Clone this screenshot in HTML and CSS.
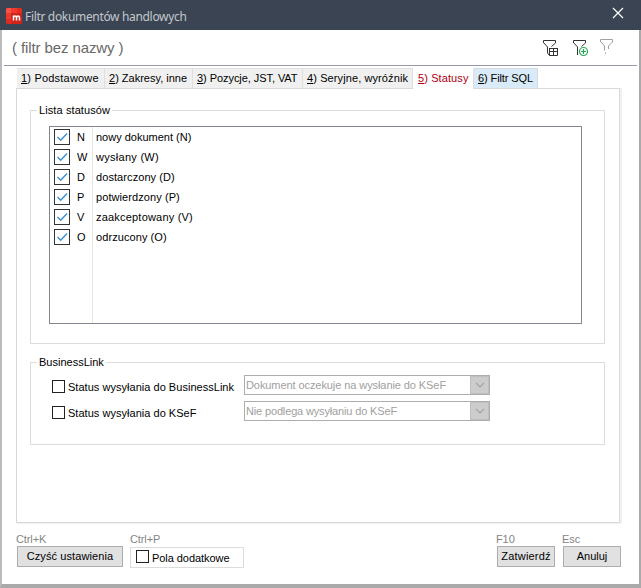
FILE: index.html
```html
<!DOCTYPE html>
<html lang="pl">
<head>
<meta charset="utf-8">
<title>Filtr dokumentów handlowych</title>
<link rel="stylesheet" href="styles.css">
</head>
<body>
<div class="window">
  <header class="titlebar">
    <svg class="logo" width="16" height="16" viewBox="0 0 16 16"><rect width="16" height="16" rx="1.5" fill="#df2b20"/><path d="M0 1.500Q0 0 1.500 0H5V5H0Z" fill="#fa5149"/><path d="M5 0h6v5H5z" fill="#f1382e"/><path d="M0 5h5v6H0z" fill="#ee382d"/><path d="M5 5h11v9.500q0 1.500-1.500 1.500H5z" fill="#d0231a"/><path d="M7.500 12.500V7.500M7.500 9.500Q7.800 8 9 8T10.500 9.600V12.500M10.500 9.600Q10.800 8 12 8T13.500 9.600V12.500" fill="none" stroke="#fff" stroke-width="1.500"/></svg>
    <h1 class="title">Filtr dokumentów handlowych</h1>
    <svg class="close" width="12" height="12" viewBox="0 0 12 12"><path d="M1 1l10 10M11 1L1 11" stroke="#fff" stroke-width="1.200"/></svg>
  </header>
  <main class="body">
    <div class="filterbar">
      <span class="name">( filtr bez nazwy )</span>
      <svg class="tool" width="16" height="17" viewBox="0 0 16 17" fill="none" stroke="#333"><path d="M.5 3V.5h12V3L8.500 6.500M.5 2.500L4.500 7V13l2 2.500"/><path d="M6.500 8.500h8v7h-8zM6 8.500h9M6.500 11.500h8M10.500 8.500v7"/></svg>
      <svg class="tool" width="16" height="17" viewBox="0 0 16 17" fill="none" stroke="#333"><path d="M.5 3V.5h12V3L8.500 6.500M.5 2.500L4.500 7V15"/><circle cx="10.500" cy="11.500" r="4" stroke="#27a857" stroke-width="1.200"/><path d="M8 11.500h5M10.500 9v5" stroke="#27a857" stroke-width="1.200"/></svg>
      <svg class="tool faded" width="14" height="16" viewBox="0 0 14 16" fill="none" stroke="#a0a0a0"><path d="M.5 3V.5h12V3L8.500 7V10M.5 2.500L4.500 7V11.500"/><path d="M5.500 13.500v1.500"/></svg>
    </div>
    <nav class="tabs">
      <a class="tab t1"><span><u>1</u>) Podstawowe</span></a>
      <a class="tab t2"><span><u>2</u>) Zakresy, inne</span></a>
      <a class="tab t3"><span><u>3</u>) Pozycje, JST, VAT</span></a>
      <a class="tab t4"><span><u>4</u>) Seryjne, wyróźnik</span></a>
      <a class="tab t5 active"><span><u>5</u>) Statusy</span></a>
      <a class="tab t6 sql"><span><u>6</u>) Filtr SQL</span></a>
    </nav>
    <section class="panel">
      <fieldset class="group statuses">
        <legend class="l1">Lista statusów</legend>
        <div class="list">
          <div class="row"><svg class="check" viewBox="0 0 14 14"><path d="M2.500 7l3.200 3.200L12 3.500"/></svg><span class="code">N</span><span class="label r1">nowy dokument (N)</span></div>
          <div class="row"><svg class="check" viewBox="0 0 14 14"><path d="M2.500 7l3.200 3.200L12 3.500"/></svg><span class="code">W</span><span class="label r2">wysłany (W)</span></div>
          <div class="row"><svg class="check" viewBox="0 0 14 14"><path d="M2.500 7l3.200 3.200L12 3.500"/></svg><span class="code">D</span><span class="label r3">dostarczony (D)</span></div>
          <div class="row"><svg class="check" viewBox="0 0 14 14"><path d="M2.500 7l3.200 3.200L12 3.500"/></svg><span class="code">P</span><span class="label r4">potwierdzony (P)</span></div>
          <div class="row"><svg class="check" viewBox="0 0 14 14"><path d="M2.500 7l3.200 3.200L12 3.500"/></svg><span class="code">V</span><span class="label r5">zaakceptowany (V)</span></div>
          <div class="row"><svg class="check" viewBox="0 0 14 14"><path d="M2.500 7l3.200 3.200L12 3.500"/></svg><span class="code">O</span><span class="label r6">odrzucony (O)</span></div>
          <div class="rest"></div>
        </div>
      </fieldset>
      <fieldset class="group link">
        <legend class="l2">BusinessLink</legend>
        <div class="field"><i class="box"></i><span class="caption c1">Status wysyłania do BusinessLink</span>
          <div class="combo"><span class="value v1">Dokument oczekuje na wysłanie do KSeF</span><span class="arrow"><svg width="10" height="6" viewBox="0 0 10 6"><path d="M1 .8l4 4 4-4"/></svg></span></div></div>
        <div class="field"><i class="box"></i><span class="caption c2">Status wysyłania do KSeF</span>
          <div class="combo"><span class="value v2">Nie podlega wysyłaniu do KSeF</span><span class="arrow"><svg width="10" height="6" viewBox="0 0 10 6"><path d="M1 .8l4 4 4-4"/></svg></span></div></div>
      </fieldset>
    </section>
    <footer class="footer">
      <div class="action clear"><span class="key">Ctrl+K</span><div class="button"><span class="b1">Czyść ustawienia</span></div></div>
      <div class="action extra"><span class="key">Ctrl+P</span><div class="toggle"><i class="box"></i><span class="b2">Pola dodatkowe</span></div></div>
      <div class="action confirm"><span class="key">F10</span><div class="button"><span class="b3">Zatwierdź</span></div></div>
      <div class="action cancel"><span class="key">Esc</span><div class="button"><span class="b4">Anuluj</span></div></div>
    </footer>
  </main>
</div>
</body>
</html>
```
FILE: styles.css
```css
* { box-sizing: border-box; }
body { margin: 0; font: 11px/14px "Liberation Sans", Arial, sans-serif; color: #000; }
.window { width: 641px; height: 588px; display: flex; flex-direction: column; overflow: hidden; }
.titlebar { height: 30px; background: #3a4453; display: flex; align-items: center; padding: 2px 17px 0 6px; }
.logo { flex: none; }
.title { margin: 1px auto 0 3px; font: 12px/16px "Noto Sans", sans-serif; letter-spacing: -.33px; color: #c3c7cc; white-space: nowrap; }
.close { margin-top: -6px; }
.body { flex: 1; display: flex; flex-direction: column; background: #fff; border: solid #aaa; border-width: 0 2px 4px 2px; border-left-color: #bbb; }
.filterbar { height: 36px; margin: 0 2px; border-bottom: 1px solid #9998a8; display: flex; align-items: flex-start; padding: 9px 23px 0 8px; }
.name { margin: 0 auto 0 0; font-size: 15px; line-height: 17px; letter-spacing: -.1px; color: #696969; white-space: nowrap; }
.tool { margin: 1px 14px 0 0; }
.tool.faded { margin: 0 0 0 -3px; }
.tabs { display: flex; height: 21px; margin: 2px 0 -1px 15px; position: relative; }
.tab { height: 20px; background: #f0f0f0; border: 1px solid #dfdfdf; border-width: 1px 1px 0 0; padding: 2px 0 0 4px; line-height: 15px; white-space: nowrap; }
.tab u { text-underline-offset: 1px; }
.t1 { width: 88px; letter-spacing: .2px; }
.t2 { width: 88px; }
.t3 { width: 110px; letter-spacing: -.06px; }
.t4 { width: 110px; letter-spacing: .1px; }
.t5 { width: 61px; padding-left: 5px; letter-spacing: .1px; }
.t6 { width: 64px; padding-left: 4px; letter-spacing: -.1px; }
.tab.active { background: #fff; height: 21px; color: #b00010; border-top-color: #fff; }
.tab.sql { background: #d9eaf9; border-color: #d5dbe1; }
.panel { width: 604px; height: 435px; margin-left: 14px; border: 1px solid #d9d9d9; box-shadow: 2px 0 #f0f0f0, 1px 1px #f0f0f0; padding: 14px 14px 0 13px; }
.group { margin: 0; padding: 0; border: 1px solid #dcdcdc; min-width: 0; width: 575px; }
.group legend { margin-left: 6px; padding: 0 2px; height: 14px; line-height: 14px; white-space: nowrap; }
.group .l1 { letter-spacing: .1px; }
.statuses { height: 241px; }
.list { width: 533px; height: 198px; margin: 9px 0 0 18px; border: 1px solid #828790; display: flex; flex-direction: column; }
.row { height: 20px; flex: none; display: grid; grid-template-columns: 26px 17px 1fr; align-items: center; line-height: 20px; }
.check { width: 16px; height: 16px; margin-left: 4px; border: 1px solid #333; fill: none; stroke: #3a8fd0; stroke-width: 1.4; }
.code { padding-left: 1px; height: 20px; border-right: 1px solid #e6e6dd; width: 17px; }
.label { padding-left: 3px; }
.r2 { letter-spacing: .28px; }
.r3, .r4, .r6 { letter-spacing: .08px; }
.r5 { letter-spacing: .2px; }
.rest { flex: 1; width: 43px; border-right: 1px solid #e6e6dd; }
.link { height: 90px; margin-top: 11px; }
.field { display: flex; align-items: center; height: 20px; margin: 6px 0 0 21px; }
.box { flex: none; width: 13px; height: 13px; border: 1px solid #222; margin-top: 2px; background: #fff; }
.caption { width: 176px; margin: 3px 0 0 3px; white-space: nowrap; letter-spacing: .03px; }
.combo { width: 246px; height: 20px; border: 1px solid #adadad; display: flex; font: 11px/18px "Liberation Sans", Arial, sans-serif; color: #a0a0a0; white-space: nowrap; }
.value { flex: 1; padding-left: 1px; }
.v1 { letter-spacing: -.08px; }
.v2 { letter-spacing: -.15px; }
.arrow { width: 19px; background: #ccc; border: 1px solid #bfbfbf; display: flex; align-items: center; justify-content: center; }
.arrow path { fill: none; stroke: #a2a2a2; stroke-width: 1.2; }
.footer { display: flex; margin: 9px 18px 0 14px; }
.action { display: flex; flex-direction: column; }
.key { color: #858585; height: 14px; letter-spacing: -.1px; }
.button { height: 21px; background: #e1e1e1; border: 1px solid #adadad; text-align: center; line-height: 19px; white-space: nowrap; }
.b1 { letter-spacing: .1px; }
.b2 { letter-spacing: -.06px; }
.b3 { letter-spacing: .2px; }
.clear { width: 107px; margin-right: 7px; }
.clear .button { margin-left: 1px; }
.extra { width: 114px; }
.toggle { height: 21px; margin-top: 1px; border: 1px solid #dcdcdc; display: flex; align-items: center; padding-left: 5px; gap: 3px; white-space: nowrap; }
.toggle .box { margin-top: -2px; }
.confirm { width: 59px; margin-left: auto; margin-right: 7px; }
.cancel { width: 59px; }
.confirm .button, .cancel .button { margin-left: 1px; }
```
